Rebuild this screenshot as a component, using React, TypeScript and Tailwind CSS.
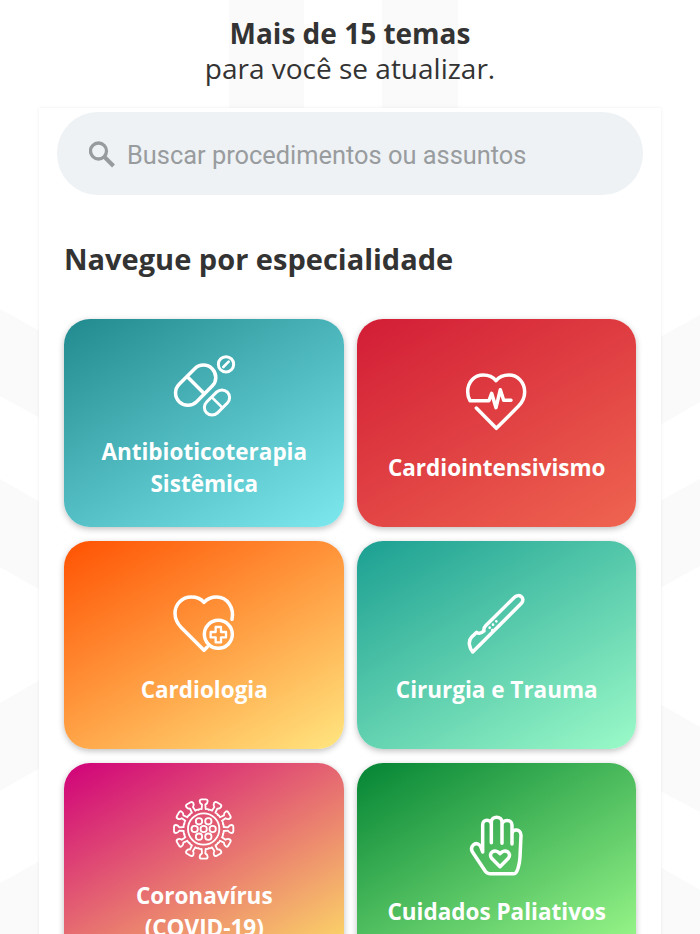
import React from "react";

const iconProps = {
  className: "h-[62px] w-[62px] shrink-0 overflow-visible",
  fill: "none",
  stroke: "#fff",
  strokeWidth: 10.5,
  strokeLinecap: "round" as const,
  strokeLinejoin: "round" as const,
};

const PillsIcon = () => (
  <svg {...iconProps} viewBox="39 29 186 186">
    <rect x="37" y="82.500" width="140" height="74" rx="37" transform="rotate(-45 107 119.500)" />
    <path d="M82 94l51 51" />
    <rect x="127" y="148.500" width="88" height="46" rx="23" transform="rotate(-45 171 171.500)" strokeWidth="9" />
    <path d="M156 156l31 31" strokeWidth="8" />
    <circle cx="198" cy="57" r="23" strokeWidth="9" />
    <path d="M190 65l16-16" strokeWidth="8" />
  </svg>
);

const HeartBeatIcon = () => (
  <svg {...iconProps} viewBox="31 31 186 186">
    <path d="M65 142l60 61l66-66C204 124 210 111 210 94C210 65 189 43 163 43C147 43 133 49 124 60C115 49 101 43 86 43C59 43 39 64 39 93C39 103 41 111 46 120H103L111 98L124 141L137 87L147 119H169" />
  </svg>
);

const HeartPlusIcon = () => (
  <svg {...iconProps} viewBox="38 22 186 186">
    <path d="M215 101C222 67 202 34 169 34C153 34 140 40 131 50C122 39 108 34 93 34C65 34 44 56 44 83C44 103 53 116 64 127L131 194L141 184" />
    <circle cx="174" cy="146" r="42" />
    <path d="M166 124h16v15h15v16h-15v15h-16v-15h-15v-16h15z" strokeWidth="7" />
  </svg>
);

const ScalpelIcon = () => (
  <svg {...iconProps} viewBox="31 37 186 186">
    <path d="M88 151Q86 142 93 135L178 51C192 36 213 51 201 67L54 214C44 202 39 181 51 169L66 155Q75 162 88 151Z" />
    <path d="M105 141v.1M115 132v.1M125 122v.1M113 148v.1" strokeWidth="8" />
  </svg>
);

const dots = [
  [0, 0],
  [-27, 0],
  [27, 0],
  [-14, -23],
  [14, -23],
  [-14, 23],
  [14, 23],
];

const VirusIcon = () => (
  <svg {...iconProps} viewBox="38 27 186 186" strokeWidth="5.500">
    <g transform="translate(130 117)">
      <circle r="47" />
      {dots.map(([x, y]) => (
        <circle key={`${x}${y}`} cx={x} cy={y} r="9.500" />
      ))}
      {Array.from({ length: 12 }).map((_, i) => (
        <path
          key={i}
          transform={`rotate(${i * 30})`}
          d="M-15.500-58Q-11-61-6-60L-5-73Q-12-77-12-83Q-12-89-6-89H6Q12-89 12-83Q12-77 5-73L6-60Q11-61 15.500-58"
        />
      ))}
    </g>
  </svg>
);

const HandIcon = () => (
  <svg {...iconProps} viewBox="30 27 186 186">
    <path d="M83 138V56C83 38 109 38 109 56V110V48C109 29 141 29 141 48V112V57C141 39 171 39 171 57V114V84C171 67 198 68 198 88L195 153C194 174 187 203 177 203H104Q96 203 91 196L53 139C43 122 60 104 76 119L83 138" />
    <path d="M135 182L110 157C98 141 120 125 135 143C150 125 172 141 160 157Z" />
  </svg>
);

const specialties = [
  { title: ["Antibioticoterapia", "Sistêmica"], icon: PillsIcon, color: "from-[#218a8f] to-[#7de9ef]" },
  { title: ["Cardiointensivismo"], icon: HeartBeatIcon, color: "from-[#d21d36] to-[#ef6450]" },
  { title: ["Cardiologia"], icon: HeartPlusIcon, color: "from-[#ff5202] to-[#ffe680]" },
  { title: ["Cirurgia e Trauma"], icon: ScalpelIcon, color: "from-[#1b9f92] to-[#9bfac8]" },
  { title: ["Coronavírus", "(COVID-19)"], icon: VirusIcon, color: "from-[#d0007a] to-[#ffe666]" },
  { title: ["Cuidados Paliativos"], icon: HandIcon, color: "from-[#048434] to-[#a4ff90]" },
];

const Background = () => (
  <svg className="absolute inset-0 h-[934px] w-[700px]" viewBox="0 0 700 934" fill="#fafafa">
    <path d="M229 0h75v110h-75zM382 0h76v110h-76z" />
    <path d="M0 309l40 22v87L0 396zM0 479l40 23v88L0 567zM0 703l40-23v88L0 791zM0 883l40-22v73H0z" />
    <path d="M700 315l-40 22v88l40-23zM700 479l-40 22v87l40-22zM700 727l-40-23v87l40 21zM700 890l-40-23v67h40z" />
  </svg>
);

const App = () => {
  return (
    <div className="relative h-[934px] w-[700px] overflow-hidden bg-white font-['Open_Sans',sans-serif] text-[#333]">
      <Background />
      <div className="relative flex flex-col items-center">
        <header className="flex h-[108px] flex-col items-center pt-4 text-[28px] leading-[35px] whitespace-nowrap">
          <h1 className="font-bold">Mais de 15 temas</h1>
          <p>para você se atualizar.</p>
        </header>
        <main className="h-[880px] w-[622px] bg-white px-[18px] pt-1 shadow-[0_0_3px_rgba(0,0,0,0.08)]">
          <div className="flex h-[83px] items-center rounded-[41px] bg-[#eef2f5] pl-8">
            <svg className="mt-px h-[27px] w-[27px]" viewBox="0 0 27 27" fill="none" stroke="#989b9d" strokeWidth="3.300">
              <circle cx="9.500" cy="10" r="8" />
              <path d="M15.500 16l9 9" strokeWidth="4" />
            </svg>
            <span className="ml-[11px] pt-1 font-['Roboto',sans-serif] text-[25.4px] whitespace-nowrap text-[#999c9e]">
              Buscar procedimentos ou assuntos
            </span>
          </div>
          <h2 className="mt-11 ml-[7px] text-[29px] leading-10 font-bold whitespace-nowrap">
            Navegue por especialidade
          </h2>
          <div className="mt-10 ml-[7px] grid grid-cols-[279.5px_279.5px] gap-x-[13px] gap-y-[14px]">
            {specialties.map(({ title, icon: Icon, color }) => (
              <div
                key={title[0]}
                className={`flex h-[208px] flex-col items-center justify-center gap-[19.5px] rounded-[26px] bg-linear-150/srgb shadow-[0_2px_6px_rgba(0,0,0,0.25)] ${color}`}
              >
                <Icon />
                <h3 className="-mb-2 ml-px text-center text-[22.5px] leading-[31.5px] font-bold whitespace-nowrap text-white">
                  {title.map((line) => (
                    <span key={line} className="block">
                      {line}
                    </span>
                  ))}
                </h3>
              </div>
            ))}
          </div>
        </main>
      </div>
    </div>
  );
};

export default App;
